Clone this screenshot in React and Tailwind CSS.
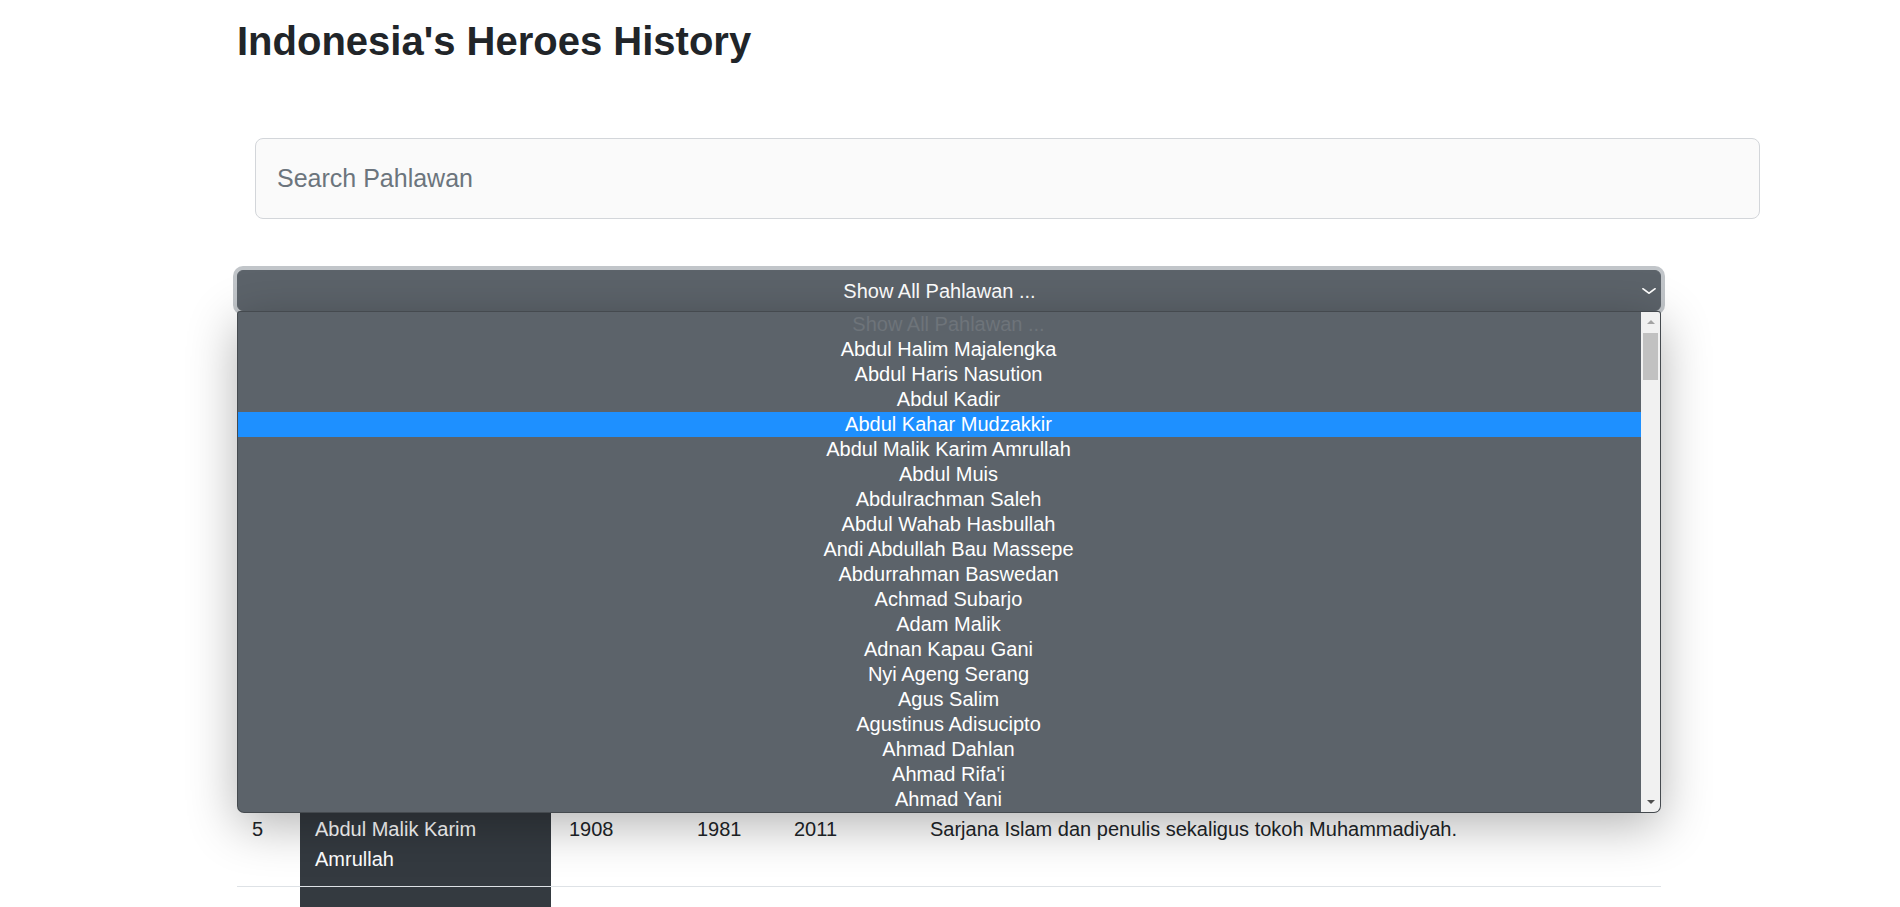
import React from 'react'

const options = [
  'Show All Pahlawan ...',
  'Abdul Halim Majalengka',
  'Abdul Haris Nasution',
  'Abdul Kadir',
  'Abdul Kahar Mudzakkir',
  'Abdul Malik Karim Amrullah',
  'Abdul Muis',
  'Abdulrachman Saleh',
  'Abdul Wahab Hasbullah',
  'Andi Abdullah Bau Massepe',
  'Abdurrahman Baswedan',
  'Achmad Subarjo',
  'Adam Malik',
  'Adnan Kapau Gani',
  'Nyi Ageng Serang',
  'Agus Salim',
  'Agustinus Adisucipto',
  'Ahmad Dahlan',
  "Ahmad Rifa'i",
  'Ahmad Yani',
]

const heroes = [
  { no: 1, name: 'Abdul Halim Majalengka', born: 1887, died: 1962, year: 2008, desc: 'Tokoh pendidikan Islam.' },
  { no: 2, name: 'Abdul Haris Nasution', born: 1918, died: 2000, year: 2002, desc: 'Jenderal Besar TNI.' },
  { no: 3, name: 'Abdul Kadir', born: 1771, died: 1875, year: 1999, desc: 'Pemimpin perlawanan.' },
  { no: 4, name: 'Abdul Kahar Mudzakkir', born: 1907, died: 1973, year: 2019, desc: 'Anggota BPUPKI.' },
  { no: 5, name: 'Abdul Malik Karim Amrullah', born: 1908, died: 1981, year: 2011, desc: 'Sarjana Islam dan penulis sekaligus tokoh Muhammadiyah.' },
]

function Row({ h, header }) {
  return (
    <div className={`flex border-b border-[#dee2e6] text-[20px] leading-[30px] ${header ? 'min-h-[55px] font-bold' : 'min-h-[85px]'}`}>
      <div className="w-[63px] shrink-0 px-[15px] py-3">{h.no}</div>
      <div className={`w-[251px] shrink-0 px-[15px] py-3 ${header ? '' : 'bg-[#343a40] text-white'}`}>{h.name}</div>
      <div className="w-[128px] shrink-0 pl-[18px] pr-[15px] py-3">{h.born}</div>
      <div className="w-[98px] shrink-0 pl-[18px] pr-[15px] py-3">{h.died}</div>
      <div className="w-[136px] shrink-0 pl-[17px] pr-[15px] py-3">{h.year}</div>
      <div className="flex-1 pl-[17px] pr-[15px] py-3">{h.desc}</div>
    </div>
  )
}

export default function App() {
  return (
    <div className="h-screen overflow-hidden bg-white font-['Liberation_Sans',Arial,sans-serif] text-[#212529]">
      <div className="ml-[237px] w-[1424px] pt-[17px]">
        {/* Title */}
        <h1 className="text-[40px] font-bold leading-[48px]">Indonesia's Heroes History</h1>

        {/* Search */}
        <div className="mt-[73px] ml-[18px] w-[1505px]">
          <input
            type="text"
            placeholder="Search Pahlawan"
            className="h-[81px] w-full rounded-[8px] border border-[#d3d6da] bg-[#fafafa] px-[21px] text-[25px] outline-none placeholder:text-[#6c757d]"
          />
        </div>

        {/* Select (open) */}
        <div className="relative z-10 mt-[51px]">
          <div className="flex h-[41px] items-center rounded-[6px] border border-[#5c636a] bg-[#5c636a] text-[20px] text-white ring-4 ring-[#c1c5c9]">
            <span className="flex-1 text-center">Show All Pahlawan ...</span>
            <svg className="mr-[3px] h-3 w-4" viewBox="0 0 16 16" preserveAspectRatio="none" fill="none">
              <path d="m2 5 6 6 6-6" stroke="white" strokeWidth="2" strokeLinecap="round" strokeLinejoin="round" />
            </svg>
          </div>

          <div className="absolute left-0 right-0 top-[41px] flex h-[502px] overflow-hidden rounded-b-[7px] rounded-t-[3px] border border-black/25 bg-[#5c636a] shadow-[0_12px_50px_rgba(0,0,0,0.3)]">
            <ul className="flex-1 text-[20px] leading-[25px]">
              {options.map((o, i) => (
                <li
                  key={o}
                  className={`h-[25px] pl-[18px] text-center ${
                    i === 0 ? 'text-[#6e747a]' : i === 4 ? 'bg-[#1e90ff] text-white' : 'text-white'
                  }`}
                >
                  {o}
                </li>
              ))}
            </ul>
            {/* scrollbar */}
            <div className="flex w-[19px] flex-col bg-[#f1f1f1]">
              <div className="flex h-[20px] items-center justify-center">
                <svg width="8" height="4" viewBox="0 0 8 4">
                  <polygon points="0,4 8,4 4,0" fill="#a3a3a3" />
                </svg>
              </div>
              <div className="mx-[2px] mt-[1px] h-[47px] bg-[#c1c1c1]" />
              <div className="flex-1" />
              <div className="flex h-[20px] items-center justify-center">
                <svg width="8" height="4" viewBox="0 0 8 4">
                  <polygon points="0,0 8,0 4,4" fill="#505050" />
                </svg>
              </div>
            </div>
          </div>
        </div>

        {/* Table */}
        <div className="mt-[96px]">
          <Row header h={{ no: 'No', name: 'Nama', born: 'Lahir', died: 'Wafat', year: 'Tahun', desc: 'Keterangan' }} />
          {heroes.map((h) => (
            <Row key={h.no} h={h} />
          ))}
          {/* next row, only its dark name cell shows in view */}
          <div className="flex h-[85px]">
            <div className="w-[63px] shrink-0" />
            <div className="w-[251px] shrink-0 bg-[#343a40]" />
          </div>
        </div>
      </div>
    </div>
  )
}
